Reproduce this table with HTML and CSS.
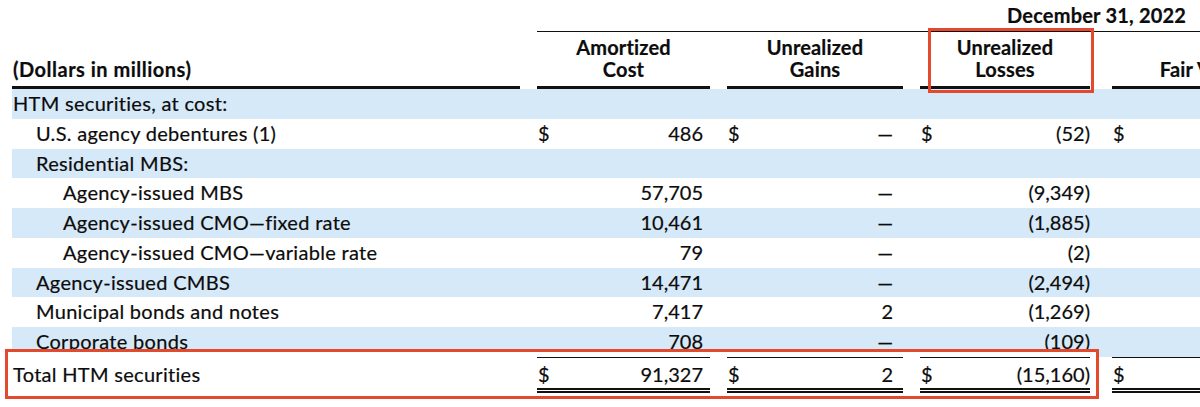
FILE: index.html
```html
<!DOCTYPE html>
<html lang="en">
<head>
<meta charset="utf-8">
<title>HTM securities — December 31, 2022</title>
<link rel="stylesheet" href="styles.css">
</head>
<body>
<div class="sheet">
  <div class="row head-top">
    <div class="period">December 31, 2022</div>
  </div>
  <div class="row head">
    <div class="hcell label">(Dollars in millions)</div>
    <div class="hcell">Amortized<br>Cost</div>
    <div class="hcell">Unrealized<br>Gains</div>
    <div class="hcell marked">Unrealized<br>Losses</div>
    <div class="hcell fair">Fair Value</div>
  </div>

  <div class="row band">
    <div class="label l0">HTM securities, at cost:</div>
    <div class="v amort"></div>
    <div class="v gain"></div>
    <div class="v loss"></div>
    <div class="v fair"></div>
  </div>
  <div class="row">
    <div class="label l1">U.S. agency debentures (1)</div>
    <div class="v amort"><span class="cur">$</span><span class="num">486</span></div>
    <div class="v gain"><span class="cur">$</span><span class="num">—</span></div>
    <div class="v loss"><span class="cur">$</span><span class="num">(52)</span></div>
    <div class="v fair"><span class="cur">$</span></div>
  </div>
  <div class="row band">
    <div class="label l1">Residential MBS:</div>
    <div class="v amort"></div>
    <div class="v gain"></div>
    <div class="v loss"></div>
    <div class="v fair"></div>
  </div>
  <div class="row">
    <div class="label l2">Agency-issued MBS</div>
    <div class="v amort"><span class="num">57,705</span></div>
    <div class="v gain"><span class="num">—</span></div>
    <div class="v loss"><span class="num">(9,349)</span></div>
    <div class="v fair"></div>
  </div>
  <div class="row band">
    <div class="label l2">Agency-issued CMO—fixed rate</div>
    <div class="v amort"><span class="num">10,461</span></div>
    <div class="v gain"><span class="num">—</span></div>
    <div class="v loss"><span class="num">(1,885)</span></div>
    <div class="v fair"></div>
  </div>
  <div class="row">
    <div class="label l2">Agency-issued CMO—variable rate</div>
    <div class="v amort"><span class="num">79</span></div>
    <div class="v gain"><span class="num">—</span></div>
    <div class="v loss"><span class="num">(2)</span></div>
    <div class="v fair"></div>
  </div>
  <div class="row band">
    <div class="label l1">Agency-issued CMBS</div>
    <div class="v amort"><span class="num">14,471</span></div>
    <div class="v gain"><span class="num">—</span></div>
    <div class="v loss"><span class="num">(2,494)</span></div>
    <div class="v fair"></div>
  </div>
  <div class="row">
    <div class="label l1">Municipal bonds and notes</div>
    <div class="v amort"><span class="num">7,417</span></div>
    <div class="v gain"><span class="num">2</span></div>
    <div class="v loss"><span class="num">(1,269)</span></div>
    <div class="v fair"></div>
  </div>
  <div class="row band">
    <div class="label l1">Corporate bonds</div>
    <div class="v amort"><span class="num">708</span></div>
    <div class="v gain"><span class="num">—</span></div>
    <div class="v loss"><span class="num">(109)</span></div>
    <div class="v fair"></div>
  </div>

  <div class="row total">
    <div class="label l0">Total HTM securities</div>
    <div class="v amort"><span class="cur">$</span><span class="num">91,327</span></div>
    <div class="v gain"><span class="cur">$</span><span class="num">2</span></div>
    <div class="v loss"><span class="cur">$</span><span class="num">(15,160)</span></div>
    <div class="v fair"><span class="cur">$</span></div>
  </div>
</div>
</body>
</html>
```

FILE: styles.css
```css
html {
  overflow: hidden;
  background: #ffffff;
}

body {
  margin: 0;
  padding: 0;
  font-family: Lato, "Noto Sans", sans-serif;
  font-size: 20px;
  color: #0c0c0c;
  -webkit-text-stroke: 0.2px #0c0c0c;
}

.sheet {
  width: 1300px;
  padding-left: 12px;
  padding-bottom: 12px;
}

.row {
  display: grid;
  grid-template-columns: 508px 173px 176px 170px 188px;
  column-gap: 17px;
}

.fair {
  margin-left: 5px;
}

/* ---------- header ---------- */
.head-top .period {
  grid-column: 2 / 6;
  font-weight: 700;
  line-height: 24px;
  padding: 3px 0 4px 470px;
  letter-spacing: 0.2px;
  border-bottom: 1px solid #111;
}

.head .hcell {
  align-self: end;
  font-weight: 700;
  text-align: center;
  line-height: 22px;
  padding: 4px 0 6px;
  letter-spacing: 0.15px;
  border-bottom: 3px solid #111;
}

.head .hcell.label {
  text-align: left;
  padding-left: 1px;
  letter-spacing: 0.5px;
}

.head .marked {
  position: relative;
}

.head .marked::after {
  content: "";
  position: absolute;
  left: 8px;
  top: -4px;
  width: 166px;
  height: 65px;
  box-sizing: border-box;
  border: 3px solid #e2492d;
  pointer-events: none;
}

/* ---------- body rows ---------- */
.row:not(.head):not(.head-top) > div {
  line-height: 29.75px;
  height: 29.75px;
  white-space: nowrap;
}

.band {
  background: #d6e9f8;
}

.label {
  letter-spacing: 0.3px;
}

.l0 { padding-left: 1px; }
.l1 { padding-left: 24px; }
.l2 { padding-left: 51px; }

.v {
  display: flex;
}

.v .cur {
  padding-left: 1px;
}

.v .num {
  margin-left: auto;
}

.amort { padding-right: 7px; }
.gain { padding-right: 10px; }
.loss { padding-right: 0; }

/* ---------- total row ---------- */
.row.total {
  position: relative;
  z-index: 0;
}

.row.total::before {
  content: "";
  position: absolute;
  left: -7px;
  top: -8px;
  width: 1094px;
  height: 50px;
  box-sizing: border-box;
  border: 3px solid #e2492d;
  background: #ffffff;
  z-index: -1;
}

.row.total > div {
  height: auto !important;
  line-height: 27px !important;
  padding-top: 4px;
  padding-bottom: 5px;
}

.row.total > .v {
  padding-top: 3px;
  padding-bottom: 0;
  border-top: 1px solid #111;
  border-bottom: 5px double #111;
}
```
